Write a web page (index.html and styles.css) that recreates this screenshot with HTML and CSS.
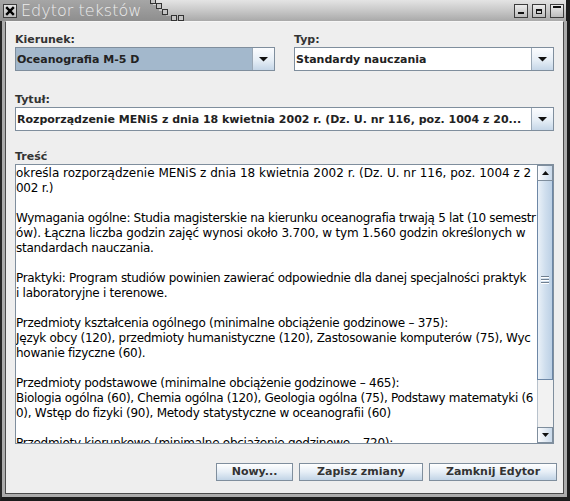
FILE: index.html
```html
<!DOCTYPE html>
<html lang="pl">
<head>
<meta charset="utf-8">
<title>Edytor tekstów</title>
<link rel="stylesheet" href="styles.css">
</head>
<body>
<div class="window">
  <div class="titlebar">
    <div class="tab">
      <span class="close-icon"><svg width="12" height="12" viewBox="0 0 12 12"><path d="M2.2 2.2L9.8 9.8M9.8 2.2L2.2 9.8" stroke="#000" stroke-width="2.4" fill="none"/></svg></span>
      <span class="title">Edytor tekstów</span>
    </div>
    <svg class="stair" width="40" height="21" viewBox="0 0 40 21">
      <defs><linearGradient id="tg" x1="0" y1="0" x2="0" y2="1"><stop offset="0" stop-color="#a6a6a6"/><stop offset="1" stop-color="#8e8e8e"/></linearGradient></defs>
      <polygon points="0,0 7,0 7,5 13,5 13,11 20,11 20,16 27,16 27,21 0,21" fill="url(#tg)"/>
      <g fill="#c4c4c4" stroke="#333" stroke-width="1">
        <rect x="4.5" y="-1.5" width="5" height="5"/>
        <rect x="10.5" y="3.5" width="5" height="5"/>
        <rect x="16.5" y="9.5" width="5" height="5"/>
        <rect x="25.5" y="15.5" width="5" height="5"/>
        <rect x="32.5" y="15.5" width="5" height="5"/>
      </g>
    </svg>
    <div class="bar-rest">
      <span class="wbtn"><svg width="12" height="12" viewBox="0 0 12 12"><rect x="3" y="7" width="6" height="2" fill="#111"/></svg></span>
      <span class="wbtn"><svg width="12" height="12" viewBox="0 0 12 12"><rect x="3.5" y="4.5" width="5" height="4" fill="none" stroke="#111"/><rect x="3" y="4" width="6" height="2" fill="#111"/></svg></span>
      <span class="wbtn"><svg width="12" height="12" viewBox="0 0 12 12"><rect x="2" y="1" width="8" height="2" fill="#111"/></svg></span>
    </div>
  </div>
  <div class="frame">
    <div class="frame-mid">
      <div class="content">
        <div class="row2">
          <div class="field">
            <div class="lbl">Kierunek:</div>
            <div class="combo">
              <span class="combo-text selected">Oceanografia M-5 D</span>
              <span class="combo-arrow"><svg width="9" height="5" viewBox="0 0 9 5"><polygon points="0,0 9,0 4.5,4.5" fill="#111"/></svg></span>
            </div>
          </div>
          <div class="field">
            <div class="lbl">Typ:</div>
            <div class="combo">
              <span class="combo-text">Standardy nauczania</span>
              <span class="combo-arrow"><svg width="9" height="5" viewBox="0 0 9 5"><polygon points="0,0 9,0 4.5,4.5" fill="#111"/></svg></span>
            </div>
          </div>
        </div>
        <div class="field field-title">
          <div class="lbl">Tytuł:</div>
          <div class="combo">
            <span class="combo-text">Rozporządzenie MENiS z dnia 18 kwietnia 2002 r. (Dz. U. nr 116, poz. 1004 z 20...</span>
            <span class="combo-arrow"><svg width="9" height="5" viewBox="0 0 9 5"><polygon points="0,0 9,0 4.5,4.5" fill="#111"/></svg></span>
          </div>
        </div>
        <div class="field field-body">
          <div class="lbl">Treść</div>
          <div class="textarea">
            <div class="text">
              <div class="ln ln-wide">określa rozporządzenie MENiS z dnia 18 kwietnia 2002 r. (Dz. U. nr 116, poz. 1004 z 2</div>
              <div class="ln">002 r.)</div>
              <div class="ln"></div>
              <div class="ln ln-tight">Wymagania ogólne: Studia magisterskie na kierunku oceanografia trwają 5 lat (10 semestr</div>
              <div class="ln ln-mid">ów). Łączna liczba godzin zajęć wynosi około 3.700, w tym 1.560 godzin określonych w</div>
              <div class="ln">standardach nauczania.</div>
              <div class="ln"></div>
              <div class="ln ln-tight">Praktyki: Program studiów powinien zawierać odpowiednie dla danej specjalności praktyk</div>
              <div class="ln">i laboratoryjne i terenowe.</div>
              <div class="ln"></div>
              <div class="ln">Przedmioty kształcenia ogólnego (minimalne obciążenie godzinowe – 375):</div>
              <div class="ln">Język obcy (120), przedmioty humanistyczne (120), Zastosowanie komputerów (75), Wyc</div>
              <div class="ln">howanie fizyczne (60).</div>
              <div class="ln"></div>
              <div class="ln">Przedmioty podstawowe (minimalne obciążenie godzinowe – 465):</div>
              <div class="ln ln-tight">Biologia ogólna (60), Chemia ogólna (120), Geologia ogólna (75), Podstawy matematyki (6</div>
              <div class="ln">0), Wstęp do fizyki (90), Metody statystyczne w oceanografii (60)</div>
              <div class="ln"></div>
              <div class="ln">Przedmioty kierunkowe (minimalne obciążenie godzinowe – 720):</div>
            </div>
            <div class="vscroll">
              <div class="sb-btn sb-up"><svg width="7" height="4" viewBox="0 0 7 4"><polygon points="0,4 7,4 3.5,0" fill="#111"/></svg></div>
              <div class="sb-thumb"><span class="grip"></span></div>
              <div class="sb-track"></div>
              <div class="sb-btn sb-down"><svg width="7" height="4" viewBox="0 0 7 4"><polygon points="0,0 7,0 3.5,4" fill="#111"/></svg></div>
            </div>
          </div>
        </div>
        <div class="buttons">
          <button class="btn btn-new">Nowy...</button>
          <button class="btn btn-save">Zapisz zmiany</button>
          <button class="btn btn-close">Zamknij Edytor</button>
        </div>
      </div>
    </div>
  </div>
</div>
</body>
</html>
```

FILE: styles.css
```css
* { box-sizing: border-box; }
html, body { margin: 0; padding: 0; }
body {
  width: 570px;
  height: 501px;
  overflow: hidden;
  background: #1c1c1c;
  font-family: "DejaVu Sans", "Noto Sans", sans-serif;
}
.window {
  width: 570px;
  height: 501px;
  display: flex;
  flex-direction: column;
}

/* title bar */
.titlebar {
  height: 21px;
  flex: none;
  display: flex;
  background: linear-gradient(#e4e4e4, #c8c8c8 50%, #a9a9a9);
  border-right: 4px solid #1c1c1c;
}
.tab {
  width: 146px;
  flex: none;
  display: flex;
  align-items: flex-start;
  background: linear-gradient(#a6a6a6, #8e8e8e);
}
.close-icon {
  width: 14px;
  height: 14px;
  margin: 4px 0 0 3px;
  display: flex;
  align-items: center;
  justify-content: center;
  background: linear-gradient(#e2e2e2, #bdbdbd);
  border: 1px solid #3c3c3c;
  flex: none;
}
.title {
  margin-left: 4px;
  font-size: 16px;
  font-weight: 200;
  line-height: 21px;
  color: #ececec;
  white-space: nowrap;
}
.stair { flex: none; display: block; }
.bar-rest {
  flex: 1;
  min-width: 0;
  display: flex;
  justify-content: flex-end;
  align-items: flex-start;
  gap: 4px;
  padding-right: 2px;
}
.wbtn {
  width: 14px;
  height: 14px;
  margin-top: 4px;
  display: flex;
  align-items: center;
  justify-content: center;
  border: 1px solid #3c3c3c;
  background: linear-gradient(#ececec, #bcbcbc);
}

/* frame */
.frame {
  flex: 1;
  min-height: 0;
  min-width: 0;
  display: flex;
  border-left: 2px solid #262626;
  border-right: 3px solid #1c1c1c;
  border-bottom: 4px solid #1c1c1c;
}
.frame-mid {
  flex: 1;
  min-width: 0;
  display: flex;
  border-left: 3px solid #ababab;
  border-right: 3px solid #ababab;
  border-bottom: 3px solid #ababab;
}
.content {
  flex: 1;
  min-width: 0;
  background: #eeeeee;
  border-left: 1px solid #4a4a4a;
  border-right: 1px solid #4a4a4a;
  border-bottom: 1px solid #4a4a4a;
  border-top: 1px solid #f6f6f6;
  padding: 11px 9px 0 9px;
  display: flex;
  flex-direction: column;
}

.row2 {
  display: grid;
  grid-template-columns: minmax(0, 1fr) minmax(0, 1fr);
  column-gap: 19px;
}
.field { display: flex; flex-direction: column; min-width: 0; }
.lbl {
  font-weight: bold;
  font-size: 11px;
  line-height: 14px;
  color: #333333;
}
.field-title { margin-top: 22px; }
.field-body { margin-top: 19px; }

.combo {
  height: 24px;
  min-width: 0;
  display: flex;
  border: 1px solid #7f8e9d;
  background: #ffffff;
}
.combo-text {
  flex: 1;
  min-width: 0;
  padding: 1px 0 0 1px;
  font-weight: bold;
  font-size: 11px;
  line-height: 21px;
  color: #222222;
  white-space: nowrap;
  overflow: hidden;
}
.combo-text.selected { background: #a3b8cc; }
.combo-arrow {
  width: 22px;
  flex: none;
  display: flex;
  align-items: center;
  justify-content: center;
  border-left: 1px solid #9aa8b6;
  background: linear-gradient(#fbfcfe, #e6eef6 55%, #c5d6e7);
}

/* text area */
.textarea {
  height: 280px;
  min-width: 0;
  display: flex;
  border: 1px solid #7f8e9d;
  background: #ffffff;
}
.text {
  flex: 1;
  min-width: 0;
  overflow: hidden;
  padding: 1px 0 0 0;
  font-size: 12px;
  line-height: 15px;
  color: #000000;
  letter-spacing: -0.27px;
}
.ln {
  height: 15px;
  white-space: pre;
}
.ln-wide { letter-spacing: 0; }
.ln-mid { letter-spacing: -0.17px; }
.ln-tight { letter-spacing: -0.32px; }
.vscroll {
  width: 16px;
  flex: none;
  display: flex;
  flex-direction: column;
  background: #f2f2f2;
}
.sb-btn {
  height: 16px;
  flex: none;
  display: flex;
  align-items: center;
  justify-content: center;
  border: 1px solid #7f8e9d;
  background: linear-gradient(90deg, #fbfcfe, #dfe8f2 60%, #c9d9ea);
}
.sb-thumb {
  height: 199px;
  flex: none;
  display: flex;
  align-items: center;
  justify-content: center;
  border: 1px solid #6d87a6;
  border-top: 0;
  background: linear-gradient(90deg, #eaf1f8, #d0dfee 50%, #bcd0e5);
}
.grip {
  width: 8px;
  height: 8px;
  background: repeating-linear-gradient(to bottom, #6f7f90 0 1px, #ffffff 1px 2px, transparent 2px 3px);
}
.sb-track {
  flex: 1;
  border-left: 1px solid #b8c2cc;
}

/* buttons */
.buttons {
  margin-top: 19px;
  margin-right: -3px;
  display: flex;
  justify-content: flex-end;
  gap: 6px;
}
.btn {
  height: 18px;
  padding: 0;
  border: 1px solid #7f8e9d;
  background: linear-gradient(#ffffff, #e6eef6 50%, #c2d4e6);
  font-family: "DejaVu Sans", "Noto Sans", sans-serif;
  font-weight: bold;
  font-size: 11px;
  line-height: 16px;
  color: #333333;
  text-align: center;
}
.btn-new { width: 77px; }
.btn-save { width: 124px; }
.btn-close { width: 128px; }
```
